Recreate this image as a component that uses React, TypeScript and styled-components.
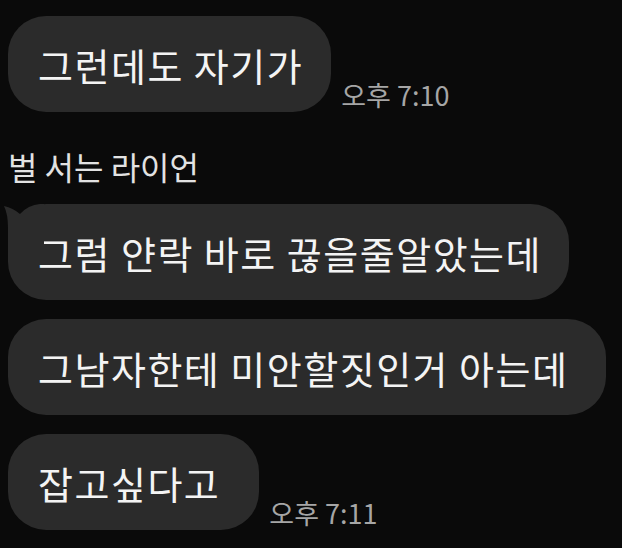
import React from "react";
import styled, { createGlobalStyle } from "styled-components";

const Global = createGlobalStyle`
  html, body {
    margin: 0;
    padding: 0;
    background: #0a0a0a;
  }
  body {
    font-family: "Noto Sans CJK KR", "Noto Sans", sans-serif;
    -webkit-font-smoothing: antialiased;
  }
`;

const Chat = styled.div`
  display: flex;
  flex-direction: column;
  align-items: flex-start;
  gap: 19px;
  padding: 16px 0 0 8px;
  width: 622px;
  height: 548px;
  box-sizing: border-box;
  overflow: hidden;
`;

const Row = styled.div`
  display: flex;
  align-items: flex-end;
  gap: 10px;
`;

const Bubble = styled.div<{ $pr?: number }>`
  position: relative;
  display: flex;
  align-items: center;
  height: 96px;
  box-sizing: border-box;
  padding: 0 ${(p) => p.$pr ?? 30}px 0 30px;
  border-radius: 38px;
  background: #2b2b2b;
  color: #f4f4f4;
  font-size: 38px;
  letter-spacing: 1.5px;
  white-space: nowrap;
`;

const Tail = styled.svg`
  position: absolute;
  left: -4px;
  top: 0;
  width: 40px;
  height: 40px;
`;

const Time = styled.span`
  color: #a6a6a6;
  font-size: 27px;
  line-height: 30px;
  margin-bottom: 2px;
  white-space: nowrap;
`;

const Name = styled.div`
  color: #e2e2e2;
  font-size: 32px;
  line-height: 38px;
  margin-top: 16px;
`;

export default function App() {
  return (
    <>
      <Global />
      <Chat>
        <Row>
          <Bubble $pr={28}>그런데도 자기가</Bubble>
          <Time>오후 7:10</Time>
        </Row>
        <Name>벌 서는 라이언</Name>
        <Bubble $pr={27}>
          <Tail viewBox="0 0 40 40">
            <path
              d="M0 2 Q9 4 16 10 Q24 1 36 0 L40 0 L40 40 L4 40 L4 24 Q4 10 0 2 Z"
              fill="#2b2b2b"
            />
          </Tail>
          그럼 얀락 바로 끊을줄알았는데
        </Bubble>
        <Bubble $pr={38}>그남자한테 미안할짓인거 아는데</Bubble>
        <Row>
          <Bubble $pr={39}>잡고싶다고</Bubble>
          <Time>오후 7:11</Time>
        </Row>
      </Chat>
    </>
  );
}
